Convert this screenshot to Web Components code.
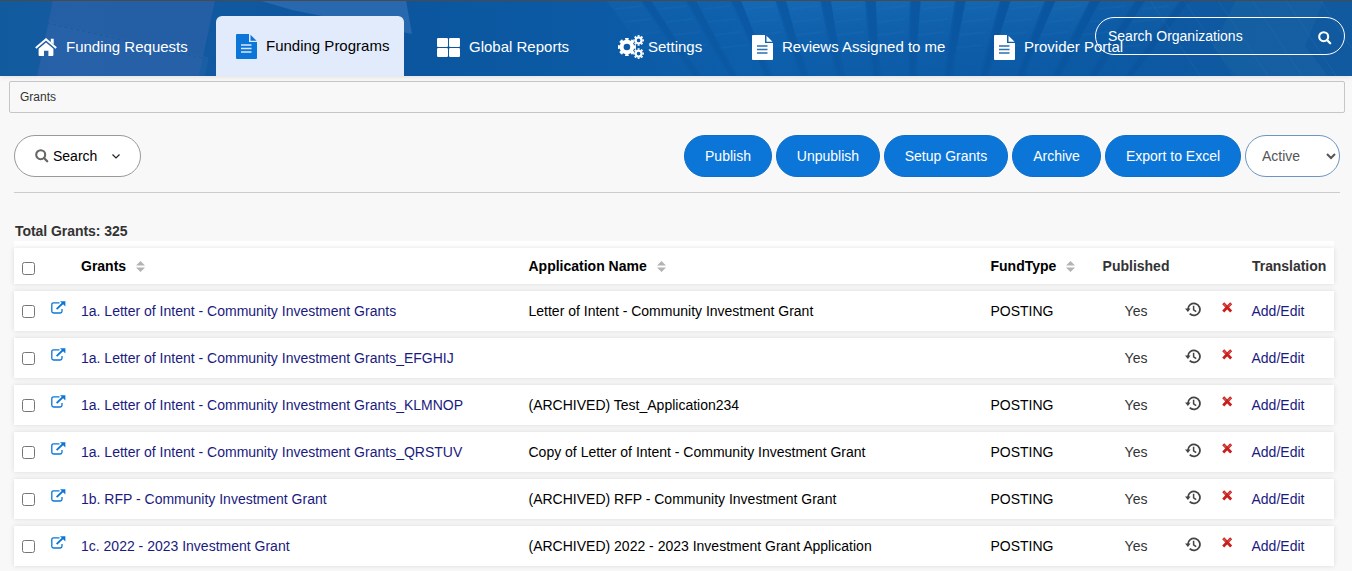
<!DOCTYPE html>
<html lang="en">
<head>
<meta charset="utf-8">
<title>Funding Programs</title>
<style>
  body{margin:0;background:#f8f8f8;color:#333;font:14px/20px "Liberation Sans",Arial,sans-serif;height:571px;overflow:hidden}
</style>
</head>
<body>
<grants-app></grants-app>
<script>
(function () {
  const ICONS = {
    home: [22, 18, `<path d="M3.6 10.8 11 4.6l7.4 6.2V17q0 1-1 1h-4v-5.2H9V18H4.6q-1 0-1-1z" fill="currentColor"/><path d="M.8 9.9 11 1.3l10.2 8.6" fill="none" stroke="currentColor" stroke-width="2"/><path d="M15.8.8h2.9v5.8l-2.9-2.4z" fill="currentColor"/>`],
    file: [21, 25, `<path d="M1 0h12v8h8v16q0 1-1 1H1q-1 0-1-1V1q0-1 1-1z" fill="currentColor"/><path d="M14.5.8 20.6 6.8h-6.1z" fill="currentColor"/><path d="M5 11h10.5M5 14.5h10.5M5 18h10.5" stroke="var(--line,#2d70b3)" stroke-width="1.4"/>`],
    tiles: [23, 19, `<g fill="currentColor"><rect width="11" height="9" rx="1.2"/><rect x="12" width="11" height="9" rx="1.2"/><rect y="10" width="11" height="9" rx="1.2"/><rect x="12" y="10" width="11" height="9" rx="1.2"/></g>`],
    cogs: [26, 24, `<g fill="none" stroke="currentColor"><circle cx="8.9" cy="12" r="5.3" stroke-width="4"/><circle cx="8.9" cy="12" r="7.9" stroke-width="2.4" pathLength="16" stroke-dasharray="1.1 .9" stroke-dashoffset=".55"/><g id="s"><circle cx="20.6" cy="5.4" r="3" stroke-width="2.3"/><circle cx="20.6" cy="5.4" r="4.6" stroke-width="1.5" pathLength="16" stroke-dasharray="1.1 .9" stroke-dashoffset=".55"/></g><use href="#s" y="13.2"/></g>`],
    search: [14, 14, `<circle cx="5.7" cy="5.7" r="4.5" fill="none" stroke="currentColor" stroke-width="2.1"/><path d="m9 9 3.2 3.2" stroke="currentColor" stroke-width="2.3" stroke-linecap="round"/>`],
    chevron: [8, 5, `<path d="M.5.5 4 4 7.5.5" fill="none" stroke="currentColor" stroke-width="1.2"/>`],
    sort: [9, 11, `<path d="M4.5 0 9 4.6H0zM4.5 11 9 6.4H0z" fill="currentColor"/>`],
    open: [15, 13, `<path d="M8.5 1.8H2.6Q.8 1.8.8 3.6v6.6q0 1.8 1.8 1.8h6.6q1.8 0 1.8-1.8V8" fill="none" stroke="currentColor" stroke-width="1.3"/><path d="M5.6 8.2 12 2" stroke="currentColor" stroke-width="1.8"/><path d="M9 .2h5.4v5.2z" fill="currentColor"/>`],
    history: [16, 15, `<path d="M2.9 7.4A6 6 0 1 1 4.7 11.7" fill="none" stroke="currentColor" stroke-width="1.8"/><path d="M0 6.6h5.6L2.9 10z" fill="currentColor"/><path d="M8.6 3.8v4l2.6 1.9" fill="none" stroke="currentColor" stroke-width="1.5"/>`],
    cross: [11, 11, `<path d="m2.2 2.3 6 6.2M8.2 2.3l-6 6.2" stroke="#c91f1c" stroke-width="2.8" stroke-linecap="square"/><path d="m1.7 1.9 2.4 2.4M8.7 1.9 6.3 4.3" stroke="#dd5a52" stroke-width="1.2"/>`]
  };

  const define = (tag, html, setup) => {
    const tpl = document.createElement("template");
    tpl.innerHTML = html;
    customElements.define(tag, class extends HTMLElement {
      constructor(){
        super();
        this.attachShadow({mode:"open"}).appendChild(tpl.content.cloneNode(true));
      }
      connectedCallback(){ if (setup) setup(this, this.shadowRoot); }
    });
  };

  define("ui-icon", `<style>:host{display:block;flex:none} svg{display:block}</style>`, (el, root) => {
    const [w, h, body] = ICONS[el.getAttribute("name")];
    root.innerHTML += `<svg width="${w}" height="${h}" viewBox="0 0 ${w} ${h}">${body}</svg>`;
  });

  // blue photo-like backdrop behind the navigation
  define("header-backdrop", `
    <style>:host{display:block;position:absolute;inset:0;z-index:-1} svg{display:block}</style>
    <svg width="1352" height="75" viewBox="0 1 1352 75">
      <defs>
        <linearGradient id="g"><stop offset="0" stop-color="#125a9e"/><stop offset=".06" stop-color="#145ba1"/>
          <stop offset=".3" stop-color="#0b569e"/><stop offset=".55" stop-color="#0c5daa"/><stop offset=".8" stop-color="#0b58a3"/><stop offset="1" stop-color="#125a9f"/></linearGradient>
        <linearGradient id="hi" gradientUnits="userSpaceOnUse" x1="0" y1="0" x2="0" y2="76"><stop offset="0" stop-color="#2a84cb"/><stop offset=".6" stop-color="#1c6fb8" stop-opacity=".5"/><stop offset="1" stop-color="#1c6fb8" stop-opacity=".15"/></linearGradient>
      </defs>
      <path d="M0 0h1352v76H0z" fill="url(#g)"/>
      <path d="M53 0h162l-16 76H37z" fill="#2860a7" opacity=".85"/>
      <path d="M49 22l160 35-4 19H38z" fill="#2a67ad" opacity=".35"/>
      <path d="M47 23l156 35" stroke="#174f93" stroke-dasharray="3 3" opacity=".5"/>
      <path d="M258 0h148l6 34-120-24z" fill="#2e6db3" opacity=".8"/>
      <g id="rays"></g>
      <path d="M1236 0h88l-19 46 23 30h-92l-23-30z" fill="#2b70aa" opacity=".22"/>
    </svg>`, (el, root) => {
    let out = "";
    for (let i = 0; i < 13; i++){
      const x = 606 + i * 45, dx = (860 - x) * .2;
      const k = x > 700 && x < 1100 ? .3 : .13;
      out += `<path d="M${x} 0h34l${dx} 76h-29z" fill="url(#hi)" opacity="${k}"/>`;
      out += `<path d="M${x + 36} 0h8l${dx} 76h-7z" fill="#084c94" opacity=".25"/>`;
      for (let y = 9; y < 60; y += 13) out += `<path d="M${x + dx * y / 76 + 3} ${y}l27-3" stroke="#3b8bcd" stroke-width="2" opacity=".09"/>`;
    }
    for (let x = 1150; x < 1350; x += 34) out += `<path d="M${x} 0l50 76" stroke="#3c83bd" opacity=".2"/>`;
    root.getElementById("rays").innerHTML = out;
  });

  define("nav-item", `
    <style>
      :host{display:flex;align-items:center;color:#fff;font-size:15px;white-space:nowrap;height:60px}
      span{margin-left:var(--gap,9px);padding-top:2px}
      ui-icon{margin-top:var(--shift,2px)}
      :host([active]){--line:#dbe8fb;background:#e2ebfc;color:#000;border-radius:6px 6px 0 0;box-sizing:border-box;width:188px;padding-left:20px}
      :host([active]) ui-icon{color:#0b76d8}
      :host([active]) span{padding-top:0}
    </style>
    <span><slot></slot></span>`, (el, root) => {
    const icon = document.createElement("ui-icon");
    icon.setAttribute("name", el.getAttribute("icon"));
    root.querySelector("span").before(icon);
  });

  define("org-search", `
    <style>
      :host{position:absolute;left:1095px;top:16px;width:250px;height:38px;box-sizing:border-box;border:1px solid #fff;border-radius:19px;
        display:flex;align-items:center;justify-content:space-between;padding:0 12px 0 12px;color:#fff}
      ui-icon{margin-top:4px}
    </style><span><slot></slot></span><ui-icon name="search"></ui-icon>`);

  define("site-header", `
    <style>
      :host{display:block;position:relative;z-index:0;height:75px;border-top:1px solid #4a4a4a;box-shadow:0 1px 5px rgba(0,0,0,.1)}
      nav{display:grid;grid-template-columns:181px 221px 181px 134px 242px auto;padding:15px 0 0 35px}
    </style>
    <header-backdrop></header-backdrop>
    <nav>
      <nav-item icon="home">Funding Requests</nav-item>
      <nav-item icon="file" active style="--shift:1px">Funding Programs</nav-item>
      <nav-item icon="tiles">Global Reports</nav-item>
      <nav-item icon="cogs" style="--gap:4px">Settings</nav-item>
      <nav-item icon="file" style="--shift:3px">Reviews Assigned to me</nav-item>
      <nav-item icon="file" style="--shift:3px">Provider Portal</nav-item>
    </nav>
    <org-search>Search Organizations</org-search>`);

  define("crumb-bar", `
    <style>:host{display:block;margin:5px 7px 0 9px;height:30px;border:1px solid #c6c6c6;border-radius:2px;padding-left:10px;font-size:12px;line-height:30px}</style><slot></slot>`);

  define("pill-button", `
    <style>
      :host{display:flex;align-items:center;justify-content:center;box-sizing:border-box;height:42px;border:1px solid #0b6fcb;border-radius:21px;background:#0b76d8;color:#fff;white-space:nowrap}
      :host([plain]){justify-content:flex-start;padding-left:20px;background:#fff;border-color:#999;color:#000}
    </style><slot></slot>`);

  define("grants-toolbar", `
    <style>
      :host{display:grid;grid-template-columns:127px 1fr 88px 104px 124px 89px 136px 95px;column-gap:4px;margin:22px 12px 0 14px;padding-bottom:15px;border-bottom:1px solid #ccc}
      .find{color:#666;margin-right:4px}
      .chev{margin-left:15px;color:#222}
      select{box-sizing:border-box;width:95px;height:42px;border:1px solid #6c96c1;border-radius:21px;background:#fff;color:#555;font:inherit;padding:0 1px 0 12px}
    </style>
    <pill-button plain><ui-icon class="find" name="search"></ui-icon><span>Search</span><ui-icon class="chev" name="chevron"></ui-icon></pill-button>
    <span></span>
    <pill-button>Publish</pill-button>
    <pill-button>Unpublish</pill-button>
    <pill-button>Setup Grants</pill-button>
    <pill-button>Archive</pill-button>
    <pill-button>Export to Excel</pill-button>
    <select><option>Active</option></select>`);

  const ROW_CSS = `
    :host{display:grid;grid-template-columns:37px 30px 447.5px 462px 111.5px 68px 52px 29.5px 1fr;align-items:center;background:#fff;box-shadow:0 0 5px rgba(0,0,0,.12);white-space:nowrap;color:#000}
    input{margin:1px 0 0 8px;width:13px;height:13px}
    .mid{text-align:center;color:#333}`;

  define("grant-head", `
    <style>${ROW_CSS}
      :host{height:36px;font-weight:bold}
      .sort{display:flex;align-items:center;gap:10px}
      ui-icon{color:#b3b3b3}
      .dark{color:#333;margin-left:.5px;letter-spacing:-.05px}
      input{margin-top:5px}
    </style>
    <input type="checkbox"><span></span>
    <span class="sort">Grants <ui-icon name="sort"></ui-icon></span>
    <span class="sort">Application Name <ui-icon name="sort"></ui-icon></span>
    <span class="sort">FundType <ui-icon name="sort"></ui-icon></span>
    <span class="mid">Published</span><span></span><span></span><span class="dark">Translation</span>`);

  define("grant-row", `
    <style>${ROW_CSS}
      :host{height:40px}
      a{color:#1a1a80}
      .open{color:#0b76d8;margin-top:-7px}
      .history{color:#444;margin:-4px 0 0 15px}
      .cross{margin-top:-7px}
    </style>
    <input type="checkbox">
    <ui-icon class="open" name="open"></ui-icon>
    <a><slot></slot></a>
    <span><slot name="app"></slot></span>
    <span><slot name="fund"></slot></span>
    <span class="mid">Yes</span>
    <ui-icon class="history" name="history"></ui-icon>
    <ui-icon class="cross" name="cross"></ui-icon>
    <a>Add/Edit</a>`);

  const ROWS = [
    ["1a. Letter of Intent - Community Investment Grants", "Letter of Intent - Community Investment Grant", "POSTING"],
    ["1a. Letter of Intent - Community Investment Grants_EFGHIJ", "", ""],
    ["1a. Letter of Intent - Community Investment Grants_KLMNOP", "(ARCHIVED) Test_Application234", "POSTING"],
    ["1a. Letter of Intent - Community Investment Grants_QRSTUV", "Copy of Letter of Intent - Community Investment Grant", "POSTING"],
    ["1b. RFP - Community Investment Grant", "(ARCHIVED) RFP - Community Investment Grant", "POSTING"],
    ["1c. 2022 - 2023 Investment Grant", "(ARCHIVED) 2022 - 2023 Investment Grant Application", "POSTING"]
  ];

  define("grants-table", `
    <style>
      :host{display:block;margin:28px 18px 0 14px}
      h2{margin:0 0 0 1px;font-size:14px;line-height:20px;letter-spacing:-.05px;color:#333}
      .top{background:#fff;padding-top:7px}
      .rows{display:flex;flex-direction:column;gap:7px;margin-top:7px}
    </style>
    <h2><slot></slot></h2>
    <div class="top"><grant-head></grant-head></div>
    <div class="rows"></div>`, (el, root) => {
    root.querySelector(".rows").innerHTML = ROWS.map(([name, app, fund]) =>
      `<grant-row>${name}<span slot="app">${app}</span><span slot="fund">${fund}</span></grant-row>`).join("");
  });

  define("grants-app", `
    <style>:host{display:block}</style>
    <site-header></site-header>
    <crumb-bar>Grants</crumb-bar>
    <grants-toolbar></grants-toolbar>
    <grants-table>Total Grants: 325</grants-table>`);
})();
</script>
</body>
</html>
